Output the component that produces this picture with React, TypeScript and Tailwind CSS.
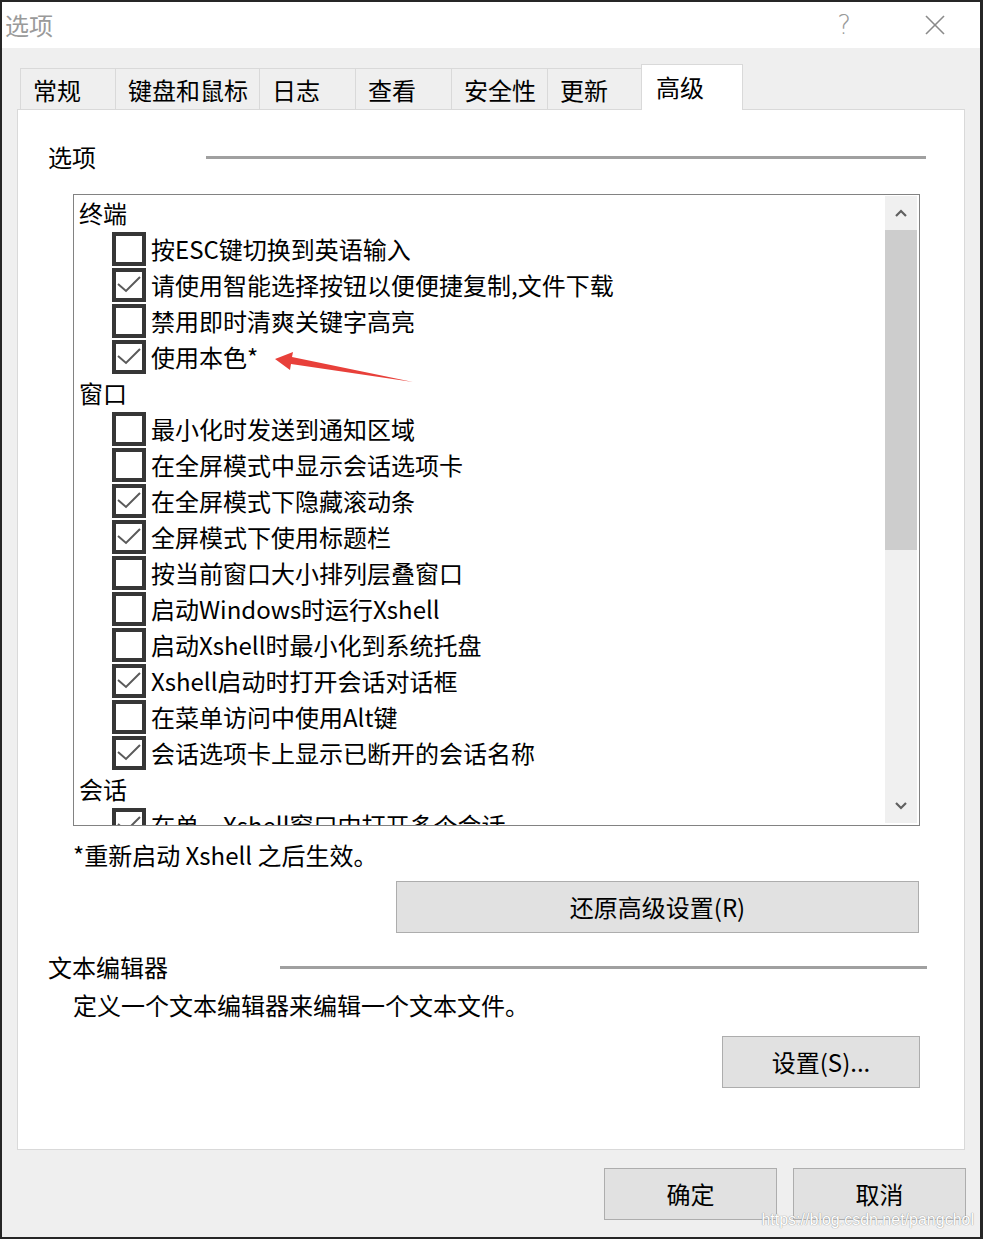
import React from "react";

const FONT = '"Noto Sans CJK SC", "Microsoft YaHei", sans-serif';

type Item = { type: "h"; label: string } | { type: "c"; label: string; checked: boolean };

const items: Item[] = [
  { type: "h", label: "终端" },
  { type: "c", label: "按ESC键切换到英语输入", checked: false },
  { type: "c", label: "请使用智能选择按钮以便便捷复制,文件下载", checked: true },
  { type: "c", label: "禁用即时清爽关键字高亮", checked: false },
  { type: "c", label: "使用本色*", checked: true },
  { type: "h", label: "窗口" },
  { type: "c", label: "最小化时发送到通知区域", checked: false },
  { type: "c", label: "在全屏模式中显示会话选项卡", checked: false },
  { type: "c", label: "在全屏模式下隐藏滚动条", checked: true },
  { type: "c", label: "全屏模式下使用标题栏", checked: true },
  { type: "c", label: "按当前窗口大小排列层叠窗口", checked: false },
  { type: "c", label: "启动Windows时运行Xshell", checked: false },
  { type: "c", label: "启动Xshell时最小化到系统托盘", checked: false },
  { type: "c", label: "Xshell启动时打开会话对话框", checked: true },
  { type: "c", label: "在菜单访问中使用Alt键", checked: false },
  { type: "c", label: "会话选项卡上显示已断开的会话名称", checked: true },
  { type: "h", label: "会话" },
  { type: "c", label: "在单一Xshell窗口中打开多个会话", checked: true },
];

const tabs = [
  { label: "常规", w: 95 },
  { label: "键盘和鼠标", w: 144 },
  { label: "日志", w: 96 },
  { label: "查看", w: 96 },
  { label: "安全性", w: 96 },
  { label: "更新", w: 94 },
];

function CheckBox({ checked }: { checked: boolean }) {
  return (
    <div className="w-[34px] h-[34px] border-[4px] border-[#363636] bg-white shrink-0">
      {checked && (
        <svg width="26" height="26" viewBox="0 0 26 26">
          <polyline points="2,12 10,19 24,5" fill="none" stroke="#5a5a5a" strokeWidth="2" />
        </svg>
      )}
    </div>
  );
}

function Btn({ label, w }: { label: string; w: number }) {
  return (
    <div
      className="h-[52px] bg-[#e1e1e1] border border-[#adadad] flex items-center justify-center text-[24px] text-black"
      style={{ width: w }}
    >
      {label}
    </div>
  );
}

export default function App() {
  return (
    <div
      className="relative w-[983px] h-[1239px] border-2 border-r-[3px] border-[#262626] bg-[#efefef] flex flex-col overflow-hidden"
      style={{ fontFamily: FONT }}
    >
      {/* title bar */}
      <div className="h-[46px] bg-white flex items-center shrink-0">
        <div className="pl-[3px] text-[24px] leading-[32px] text-[#9a9a9a]">选项</div>
        <div className="flex-1" />
        <div
          className="text-[26px] leading-[32px] text-[#9a9a9a] mr-[73px]"
          style={{ fontFamily: '"DejaVu Sans", sans-serif', fontWeight: 200 }}
        >
          ?
        </div>
        <svg width="22" height="22" viewBox="0 0 22 22" className="mr-[34px]">
          <line x1="2" y1="2" x2="20" y2="20" stroke="#8a8a8a" strokeWidth="1.6" />
          <line x1="20" y1="2" x2="2" y2="20" stroke="#8a8a8a" strokeWidth="1.6" />
        </svg>
      </div>

      {/* body */}
      <div className="flex-1 flex flex-col pl-[15px]">
        {/* tabs */}
        <div className="relative z-10 mt-[16px] h-[45px] flex items-end pl-[3px]">
          {tabs.map((t) => (
            <div
              key={t.label}
              className="h-[41px] border-t border-l border-[#d9d9d9] flex items-center pl-[12px] text-[24px] text-black pt-[1px]"
              style={{ width: t.w }}
            >
              {t.label}
            </div>
          ))}
          <div className="h-[46px] w-[102px] mb-[-1px] bg-white border-t border-x border-[#d9d9d9] flex items-start pt-[4px] pl-[14px] text-[24px] text-black">
            高级
          </div>
        </div>

        {/* panel */}
        <div className="w-[948px] h-[1041px] bg-white border border-[#d9d9d9] flex flex-col pl-[30px]">
          <div className="mt-[31px] h-[32px] flex items-center">
            <div className="w-[158px] text-[24px] leading-[32px] text-black">选项</div>
            <div className="w-[720px] h-[3px] bg-[#a0a0a0]" />
          </div>

          {/* list box */}
          <div className="relative mt-[21px] ml-[25px] w-[847px] h-[632px] border border-[#828282] flex">
            <div className="flex-1 overflow-hidden">
              {items.map((it, i) =>
                it.type === "h" ? (
                  <div key={i} className="h-[36px] flex items-center pl-[5px] text-[24px] text-black">
                    {it.label}
                  </div>
                ) : (
                  <div key={i} className="h-[36px] flex items-center pl-[38px] text-[24px] text-black">
                    <CheckBox checked={it.checked} />
                    <span className="ml-[5px] whitespace-nowrap">{it.label}</span>
                  </div>
                )
              )}
            </div>
            {/* scrollbar */}
            <div className="w-[32px] mt-[1px] mb-[2px] mr-[2px] bg-[#f0f0f0] flex flex-col">
              <div className="h-[34px] flex items-center justify-center">
                <svg width="12" height="8" viewBox="0 0 12 8">
                  <polyline points="1,7 6,2 11,7" fill="none" stroke="#606060" strokeWidth="2.2" />
                </svg>
              </div>
              <div className="h-[320px] bg-[#cdcdcd]" />
              <div className="flex-1" />
              <div className="h-[34px] flex items-center justify-center">
                <svg width="12" height="8" viewBox="0 0 12 8">
                  <polyline points="1,1 6,6 11,1" fill="none" stroke="#606060" strokeWidth="2.2" />
                </svg>
              </div>
            </div>
          </div>

          <div className="mt-[13px] ml-[25px] h-[32px] text-[24px] leading-[32px] text-black">
            *重新启动 Xshell 之后生效。
          </div>

          <div className="mt-[10px] ml-[348px]">
            <Btn label="还原高级设置(R)" w={523} />
          </div>

          <div className="mt-[18px] h-[32px] flex items-center">
            <div className="w-[232px] text-[24px] leading-[32px] text-black">文本编辑器</div>
            <div className="w-[647px] h-[3px] bg-[#a0a0a0]" />
          </div>

          <div className="mt-[6px] ml-[25px] h-[32px] text-[24px] leading-[32px] text-black">
            定义一个文本编辑器来编辑一个文本文件。
          </div>

          <div className="mt-[15px] ml-[674px]">
            <Btn label="设置(S)..." w={198} />
          </div>
        </div>

        {/* footer */}
        <div className="mt-[18px] flex justify-end pr-[14px] gap-[16px]">
          <Btn label="确定" w={173} />
          <Btn label="取消" w={173} />
        </div>
      </div>

      {/* red arrow annotation */}
      <svg className="absolute left-0 top-0 pointer-events-none" width="983" height="1239">
        <polygon
          points="273,357 291,350 290,355 411,380 289,362 288,368"
          fill="#e8403a"
        />
      </svg>

      {/* watermark */}
      <div
        className="absolute right-[6px] bottom-[8px] text-[16px] leading-[18px] text-white"
        style={{ fontFamily: '"Liberation Sans", Arial, sans-serif', textShadow: "0 0 1px #9a9a9a, 0 0 1px #9a9a9a" }}
      >
        https://blog.csdn.net/pangchol
      </div>
    </div>
  );
}
